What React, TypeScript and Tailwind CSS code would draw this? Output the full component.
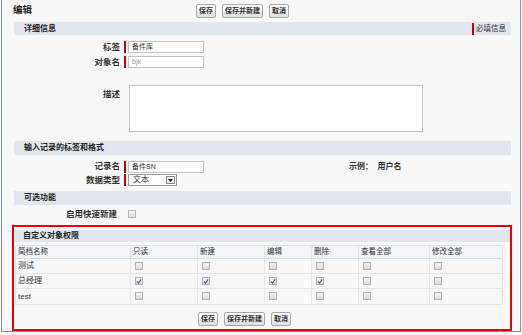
import { type ReactNode } from 'react';

const font = 'font-["Liberation_Sans","Noto_Sans_CJK_SC",sans-serif]';

function Btn({ children }: { children: ReactNode }) {
  return (
    <button className="h-[14px] px-[2px] rounded-[2px] border border-[#a9a9a9] bg-gradient-to-b from-white to-[#dcdfe3] text-[7px] leading-[12px] font-bold text-[#333]">
      {children}
    </button>
  );
}

function ButtonBar() {
  return (
    <div className="flex items-center gap-[6px]">
      <Btn>保存</Btn>
      <Btn>保存并新建</Btn>
      <Btn>取消</Btn>
    </div>
  );
}

function Band({ title, right }: { title: string; right?: ReactNode }) {
  return (
    <div className="h-[14px] flex items-center justify-between bg-[#e2e6ef] pl-[10px] pr-[5px]">
      <span className="text-[8px] font-bold text-[#222]">{title}</span>
      {right}
    </div>
  );
}

function Label({ children, className = '' }: { children: ReactNode; className?: string }) {
  return (
    <div className={`w-[110px] shrink-0 text-right pr-[4px] text-[8.5px] font-bold text-[#333] ${className}`}>
      {children}
    </div>
  );
}

function ReqBar() {
  return <div className="w-[2px] h-[12px] bg-[#c00] shrink-0" />;
}

function TextInput({ value, muted }: { value: string; muted?: boolean }) {
  return (
    <div
      className={`ml-[2px] w-[76px] h-[12px] bg-white border border-[#c4c4c4] pl-[3px] text-[7px] leading-[10px] ${
        muted ? 'text-[#999]' : 'text-[#333]'
      }`}
    >
      {value}
    </div>
  );
}

function Checkbox({ checked }: { checked?: boolean }) {
  return (
    <div className="w-[8px] h-[8px] border border-[#b4b4b4] bg-gradient-to-b from-[#f4f4f4] to-[#dcdcdc] flex items-center justify-center">
      {checked && (
        <svg width="7" height="7" viewBox="0 0 7 7">
          <path d="M1 3.5 L2.8 5.5 L6 1" fill="none" stroke="#2b4f9c" strokeWidth="1.2" />
        </svg>
      )}
    </div>
  );
}

const cols = [
  { name: '简档名称', w: 'w-[115px]' },
  { name: '只读', w: 'w-[67px]' },
  { name: '新建', w: 'w-[67px]' },
  { name: '编辑', w: 'w-[47px]' },
  { name: '删除', w: 'w-[47px]' },
  { name: '查看全部', w: 'w-[71px]' },
  { name: '修改全部', w: 'w-[74px]' },
];

const rows = [
  { name: '测试', perms: [false, false, false, false, false, false] },
  { name: '总经理', perms: [true, true, true, true, false, false] },
  { name: 'test', perms: [false, false, false, false, false, false] },
];

export default function App() {
  return (
    <div className={`w-[522px] h-[335px] bg-white ${font}`}>
      <div className="ml-px w-[520px] h-[332px] bg-[#f8f8f8] border-x border-b border-[#6f94c8] pl-[12px] pr-[9px] flex flex-col">
        {/* Title row */}
        <div className="h-[25px] flex items-center">
          <div className="w-[183px] -ml-px pb-[2px] text-[9.5px] font-bold text-[#222]">编辑</div>
          <ButtonBar />
        </div>

        <Band
          title="详细信息"
          right={
            <div className="flex items-center gap-[2px]">
              <ReqBar />
              <span className="text-[7.5px] text-[#333]">必填信息</span>
            </div>
          }
        />

        <div className="mt-[6px] flex items-center h-[12px]">
          <Label>标签</Label>
          <ReqBar />
          <TextInput value="备件库" />
        </div>
        <div className="mt-[3px] flex items-center h-[12px]">
          <Label>对象名</Label>
          <ReqBar />
          <TextInput value="bjk" muted />
        </div>

        <div className="mt-[17px] flex items-start">
          <Label className="pt-[3px]">描述</Label>
          <div className="ml-[5px] w-[294px] h-[47px] bg-white border border-[#c4c4c4]" />
        </div>

        <div className="mt-[9px]">
          <Band title="输入记录的标签和格式" />
        </div>

        <div className="mt-[6px] flex items-center h-[11px]">
          <Label>记录名</Label>
          <ReqBar />
          <TextInput value="备件SN" />
          <div className="ml-[145px] text-[8px] font-bold text-[#333] whitespace-pre">示例：  用户名</div>
        </div>
        <div className="mt-[2px] flex items-center h-[12px]">
          <Label>数据类型</Label>
          <ReqBar />
          <div className="ml-[2px] w-[49px] h-[12px] bg-white border border-[#9a9a9a] flex items-center justify-between pl-[4px] pr-px">
            <span className="text-[8px] text-[#333] leading-none">文本</span>
            <div className="w-[9px] h-[8px] border border-[#888] bg-[#ececec] flex items-center justify-center">
              <svg width="5" height="3" viewBox="0 0 5 3">
                <path d="M0 0 H5 L2.5 3 Z" fill="#222" />
              </svg>
            </div>
          </div>
        </div>

        <div className="mt-[5px]">
          <Band title="可选功能" />
        </div>

        <div className="mt-[5px] flex items-center h-[8px]">
          <Label className="pr-[7px]">启用快速新建</Label>
          <div className="ml-[4px]">
            <Checkbox />
          </div>
        </div>

        {/* Custom object permissions */}
        <div className="mt-[7px] -ml-[2px] -mr-[1px] border-2 border-[#e6000a] pl-px pt-[3px] pb-[3px] flex flex-col">
          <div className="h-[12px] flex items-center bg-[#e2e6ef] pl-[8px]">
            <span className="text-[8px] font-bold text-[#222]">自定义对象权限</span>
          </div>

          <div className="mt-[3px] w-[488px] border border-[#dfe5e9] bg-[#f8f8f8]">
            <div className="flex h-[13px] bg-[#f2f5f8] border-b border-[#d5dfe7]">
              {cols.map((c, i) => (
                <div
                  key={c.name}
                  className={`${c.w} shrink-0 pl-[2px] flex items-center text-[7.5px] text-[#333] ${
                    i < cols.length - 1 ? 'border-r border-[#dfe5e9]' : ''
                  }`}
                >
                  {c.name}
                </div>
              ))}
            </div>
            {rows.map((r, ri) => (
              <div
                key={r.name}
                className={`flex h-[15px] ${ri < rows.length - 1 ? 'border-b border-[#e2e7ea]' : ''}`}
              >
                <div className="w-[115px] shrink-0 pl-[2px] flex items-center text-[8px] text-[#333] border-r border-[#e2e7ea]">
                  {r.name}
                </div>
                {r.perms.map((p, i) => (
                  <div
                    key={i}
                    className={`${cols[i + 1].w} shrink-0 pl-[4px] pt-[3px] ${
                      i < r.perms.length - 1 ? 'border-r border-[#e2e7ea]' : ''
                    }`}
                  >
                    <Checkbox checked={p} />
                  </div>
                ))}
              </div>
            ))}
          </div>

          <div className="mt-[7px] ml-[183px]">
            <ButtonBar />
          </div>
        </div>
      </div>
    </div>
  );
}
